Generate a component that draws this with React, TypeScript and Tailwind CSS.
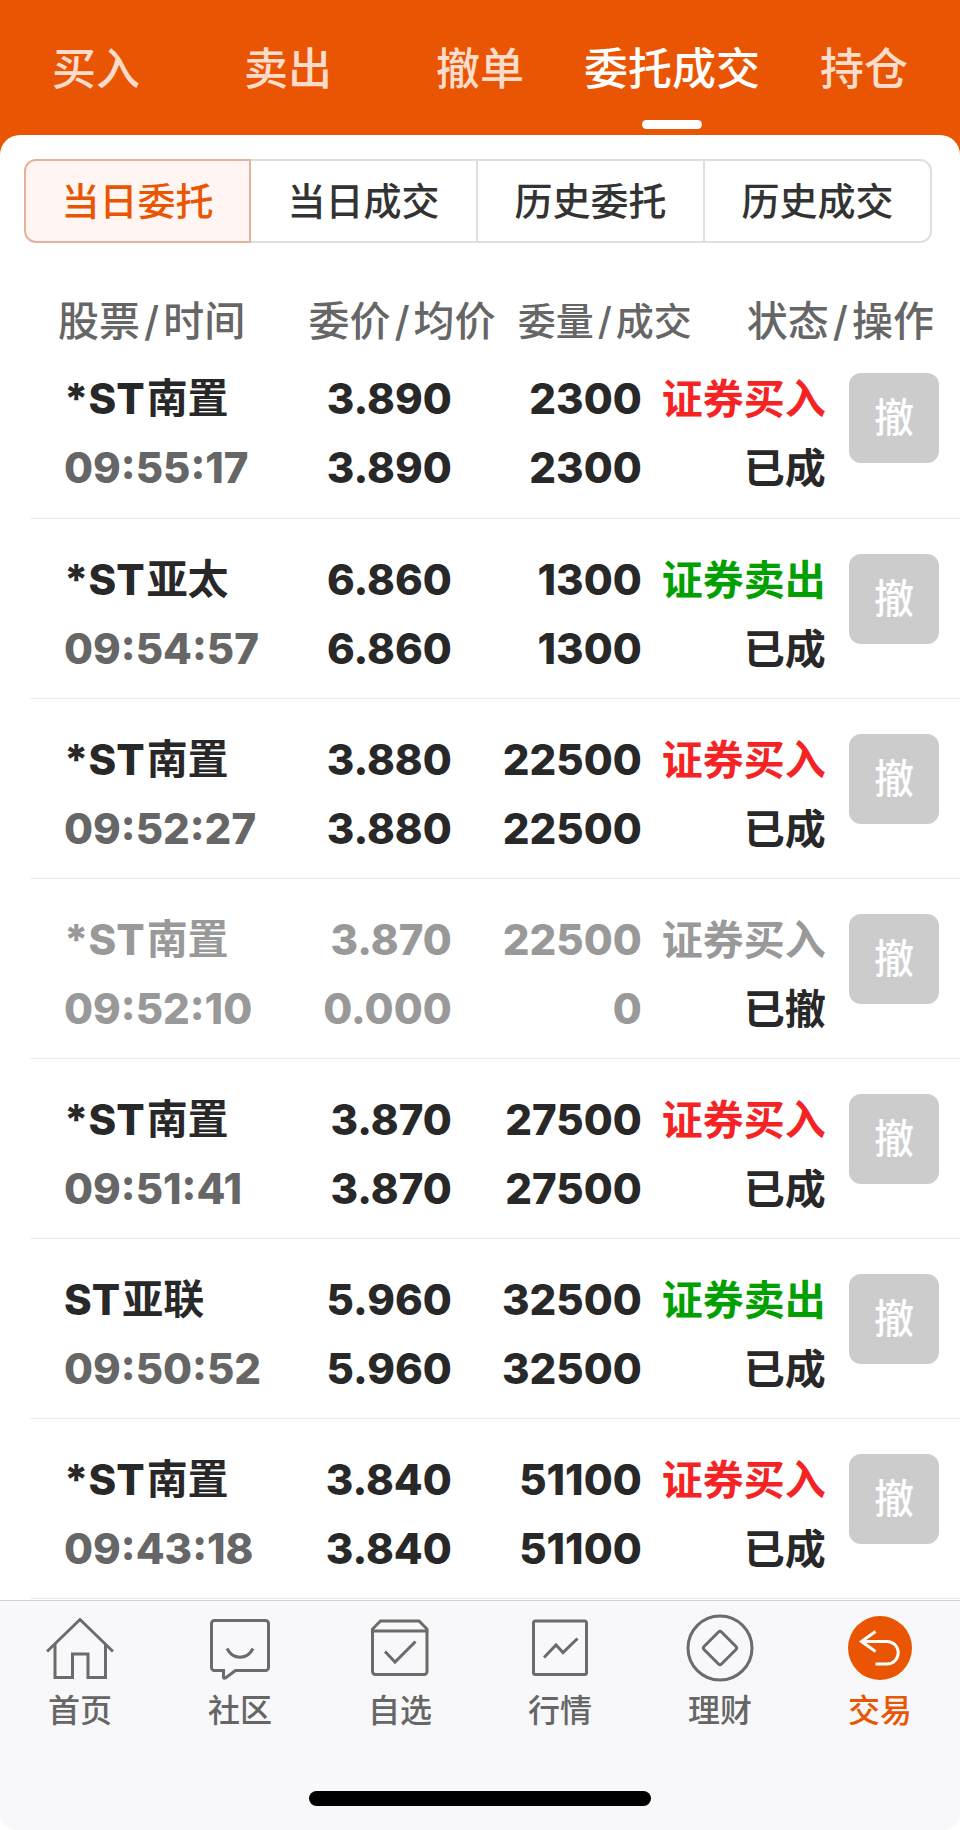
import type { ReactNode } from 'react';

type Order = {
  prefix: string;
  name: string;
  time: string;
  price: string;
  avg: string;
  qty: string;
  filled: string;
  side: 'buy' | 'sell';
  status: string;
  cancelled?: boolean;
};

const tabs = ['买入', '卖出', '撤单', '委托成交', '持仓'];
const segments = ['当日委托', '当日成交', '历史委托', '历史成交'];

const orders: Order[] = [
  { prefix: '*ST', name: '南置', time: '09:55:17', price: '3.890', avg: '3.890', qty: '2300', filled: '2300', side: 'buy', status: '已成' },
  { prefix: '*ST', name: '亚太', time: '09:54:57', price: '6.860', avg: '6.860', qty: '1300', filled: '1300', side: 'sell', status: '已成' },
  { prefix: '*ST', name: '南置', time: '09:52:27', price: '3.880', avg: '3.880', qty: '22500', filled: '22500', side: 'buy', status: '已成' },
  { prefix: '*ST', name: '南置', time: '09:52:10', price: '3.870', avg: '0.000', qty: '22500', filled: '0', side: 'buy', status: '已撤', cancelled: true },
  { prefix: '*ST', name: '南置', time: '09:51:41', price: '3.870', avg: '3.870', qty: '27500', filled: '27500', side: 'buy', status: '已成' },
  { prefix: 'ST', name: '亚联', time: '09:50:52', price: '5.960', avg: '5.960', qty: '32500', filled: '32500', side: 'sell', status: '已成' },
  { prefix: '*ST', name: '南置', time: '09:43:18', price: '3.840', avg: '3.840', qty: '51100', filled: '51100', side: 'buy', status: '已成' },
];

const navItems: { label: string; icon: ReactNode }[] = [
  {
    label: '首页',
    icon: (
      <>
        <path d="M1 37.5 34 5.5l33 32" />
        <path d="M9 30v33.5h17.5V40h15.5v23.5h17.5V30" />
      </>
    ),
  },
  {
    label: '社区',
    icon: (
      <>
        <path d="M8.5 6.5h51a3 3 0 0 1 3 3v44a3 3 0 0 1-3 3H29.5L19.5 64q-2 1-2-1v-6.5h-9a3 3 0 0 1-3-3v-44a3 3 0 0 1 3-3Z" />
        <path d="M21 34.5c5.5 11.5 20.5 11.5 26 0" />
      </>
    ),
  },
  {
    label: '自选',
    icon: (
      <>
        <path d="M6.5 17v40.5a3 3 0 0 0 3 3h48.5a3 3 0 0 0 3-3V17" />
        <path d="M6.5 17v-2l8-8h38.5l8 8v2Z" />
        <path d="M19 37.5 29 48 49.5 27.5" />
      </>
    ),
  },
  {
    label: '行情',
    icon: (
      <>
        <rect x="7.5" y="7" width="53" height="53.5" rx="2" />
        <path d="M18 43.5 30 31l7 7.5L51.5 24.5" />
      </>
    ),
  },
  {
    label: '理财',
    icon: (
      <>
        <circle cx="34" cy="34" r="32" />
        <path d="M32.5 18q1.5-1.5 3 0L50 32.5q1.5 1.5 0 3L35.5 50q-1.5 1.5-3 0L18 35.5q-1.5-1.5 0-3Z" />
      </>
    ),
  },
  {
    label: '交易',
    icon: (
      <>
        <circle cx="34" cy="34" r="32" fill="#ea5504" stroke="none" />
        <path d="M29.5 17.5 15.5 27.5l14 10M15.5 27.5H41a11.2 11.2 0 0 1 0 22.5H29.5" stroke="#fff" />
      </>
    ),
  },
];

function HeaderLabel({ left, right }: { left: string; right: string }) {
  return (
    <>
      {left}
      <span className="mx-1">/</span>
      {right}
    </>
  );
}

function OrderRow({ order }: { order: Order }) {
  const text = order.cancelled ? 'text-[#999999]' : 'text-[#282828]';
  const time = order.cancelled ? 'text-[#999999]' : 'text-[#666666]';
  const side = order.cancelled ? 'text-[#999999]' : order.side === 'buy' ? 'text-[#f52323]' : 'text-[#00a000]';

  return (
    <tr className={`h-[180px] border-b border-[#ebebeb] align-top text-[42px] leading-[69px] font-extrabold ${text}`}>
      <td className="pt-[26px] pl-[34px]">
        <div className="flex gap-0.5">
          {order.prefix}
          <span className="text-[41px] font-bold">{order.name}</span>
        </div>
        <div className={time}>{order.time}</div>
      </td>
      <td className="pt-[26px] pr-1.5 text-right">
        <div>{order.price}</div>
        <div>{order.avg}</div>
      </td>
      <td className="pt-[26px] pr-0.5 text-right">
        <div>{order.qty}</div>
        <div>{order.filled}</div>
      </td>
      <td className="pt-[27px] pr-1 text-right text-[41px] font-bold whitespace-nowrap">
        <div className={side}>{order.side === 'buy' ? '证券买入' : '证券卖出'}</div>
        <div className="text-[#282828]">{order.status}</div>
      </td>
      <td className="pt-[35px] pr-[21px]">
        <button type="button" className="ml-auto block size-[90px] rounded-xl bg-[#cccccc] text-[40px] leading-[90px] font-medium text-white">
          撤
        </button>
      </td>
    </tr>
  );
}

export default function App() {
  return (
    <div className="flex min-h-screen flex-col bg-white font-[Inter,'Noto_Sans_CJK_SC',sans-serif]">
      <header className="bg-[#ea5504]">
        <nav className="grid h-[135px] grid-cols-5">
          {tabs.map((tab) => {
            const active = tab === '委托成交';
            return (
              <a
                key={tab}
                href="#"
                className={`relative flex justify-center pt-[41px] text-[44px] leading-[56px] font-medium whitespace-nowrap ${active ? 'text-white' : 'text-[#fbdccb]'}`}
              >
                {tab}
                {active && <span className="absolute bottom-1.5 h-[9px] w-[60px] rounded-full bg-white" />}
              </a>
            );
          })}
        </nav>
        <div className="h-6 rounded-t-[20px] bg-white" />
      </header>

      <main className="grow">
        <div className="mr-7 ml-6 grid h-[84px] grid-cols-4">
          {segments.map((seg, i) => (
            <button
              key={seg}
              type="button"
              className={`border-y-2 border-r-2 text-[38px] font-medium whitespace-nowrap first:rounded-l-xl first:border-l-2 last:rounded-r-xl ${
                i === 0 ? 'border-[#e5b29b] bg-[#fff5f2] text-[#ea5504]' : 'border-[#dcdfe4] bg-white text-[#333333]'
              }`}
            >
              {seg}
            </button>
          ))}
        </div>

        <div className="-mb-px pl-[30px]">
          <table className="w-full table-fixed border-collapse">
            <colgroup>
              <col className="w-[28%]" />
              <col className="w-[18%]" />
              <col className="w-[20%]" />
              <col />
              <col className="w-[14%]" />
            </colgroup>
            <thead>
              <tr className="text-left align-top text-[41px] leading-[34px] whitespace-nowrap text-[#666666]">
                <th className="pt-[61px] pl-7 font-medium"><HeaderLabel left="股票" right="时间" /></th>
                <th className="pt-[61px] pl-[18px] font-medium"><HeaderLabel left="委价" right="均价" /></th>
                <th className="pt-[61px] pl-[60px] text-[38px] font-medium"><HeaderLabel left="委量" right="成交" /></th>
                <th colSpan={2} className="pt-[61px] pr-[26px] text-right font-medium"><HeaderLabel left="状态" right="操作" /></th>
              </tr>
            </thead>
            <tbody>
              {orders.map((order) => (
                <OrderRow key={order.time} order={order} />
              ))}
            </tbody>
          </table>
        </div>
      </main>

      <footer className="rounded-b-2xl border-t border-[#d1d1d8] bg-[#f8f8fa]">
        <nav className="grid grid-cols-6 pt-[13px]">
          {navItems.map(({ label, icon }) => (
            <a
              key={label}
              href="#"
              className={`flex flex-col items-center gap-1 text-[32px] leading-[50px] font-medium ${label === '交易' ? 'text-[#ea5504]' : 'text-[#666666]'}`}
            >
              <svg viewBox="0 0 68 68" className="size-[68px]" fill="none" stroke="#6b6b6b" strokeWidth="3" aria-hidden="true">
                {icon}
              </svg>
              {label}
            </a>
          ))}
        </nav>
        <div className="mx-auto mt-[55px] mb-6 h-[15px] w-[342px] rounded-full bg-black" />
      </footer>
    </div>
  );
}
